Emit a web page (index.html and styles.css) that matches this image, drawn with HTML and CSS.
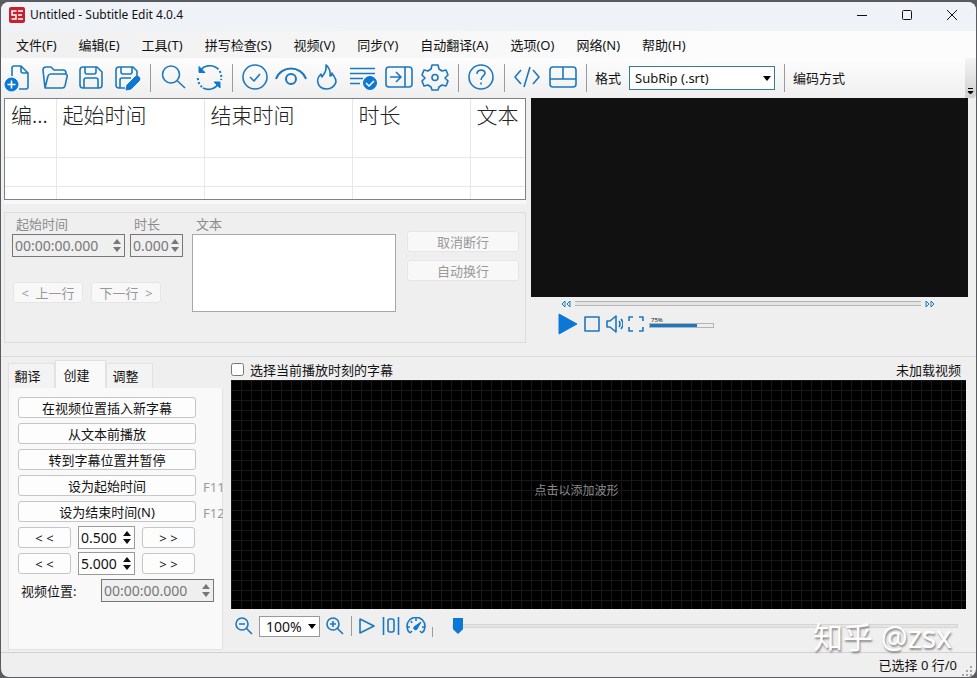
FILE: index.html
```html
<!DOCTYPE html>
<html lang="zh-CN">
<head>
  <meta charset="UTF-8" />
  <meta name="viewport" content="width=device-width, initial-scale=1.0" />
  <title>Untitled - Subtitle Edit 4.0.4</title>
  <link rel="stylesheet" href="styles.css">
</head>
<body>
  <div class="window">
    <header class="titlebar">
      <svg class="app-icon" width="16" height="16" viewBox="0 0 16 16">
        <rect width="16" height="16" rx="2" fill="#c4222d" />
        <path d="M7.500 4H3v4h4v4H2.500M9 4h5M9 8h4M9 12h5" fill="none" stroke="#fff" stroke-width="1.500" />
      </svg>
      <span class="title">Untitled - Subtitle Edit 4.0.4</span>
      <button class="win-btn" aria-label="最小化"><svg width="12" height="12" viewBox="0 0 12 12"><path d="M1 6.500h10" /></svg></button>
      <button class="win-btn" aria-label="最大化"><svg width="12" height="12" viewBox="0 0 12 12"><rect x="1.500" y="1.500" width="9" height="9" rx="1" /></svg></button>
      <button class="win-btn" aria-label="关闭"><svg width="12" height="12" viewBox="0 0 12 12"><path d="M1 1l10 10M11 1L1 11" /></svg></button>
    </header>

    <nav class="menu">
      <a href="#">文件(F)</a>
      <a href="#">编辑(E)</a>
      <a href="#">工具(T)</a>
      <a href="#">拼写检查(S)</a>
      <a href="#">视频(V)</a>
      <a href="#">同步(Y)</a>
      <a href="#">自动翻译(A)</a>
      <a href="#">选项(O)</a>
      <a href="#">网络(N)</a>
      <a href="#">帮助(H)</a>
    </nav>

    <div class="toolbar">
      <button class="tool" aria-label="新建"><svg viewBox="0 0 28 28"><path d="M7 12V4a2 2 0 0 1 2-2h7l7 7v14a2 2 0 0 1-2 2h-7M16 2v5a2 2 0 0 0 2 2h5" /><circle class="fill" cx="6.500" cy="20.500" r="6.500" /><path class="white" d="M6.500 16.500v8M2.500 20.500h8" /></svg></button>
      <button class="tool" aria-label="打开"><svg viewBox="0 0 28 28"><path d="M4 24L2 6a3 3 0 0 1 3-3h5l3 3h9a3 3 0 0 1 3 3v1M4 24l3-12a3 3 0 0 1 3-2h14a2 2 0 0 1 2 3l-2 9a3 3 0 0 1-3 2z" /></svg></button>
      <button class="tool" aria-label="保存"><svg viewBox="0 0 28 28"><path d="M6 3h14l5 5v13a3 3 0 0 1-3 3H6a3 3 0 0 1-3-3V6a3 3 0 0 1 3-3zM8 3v5a2 2 0 0 0 2 2h7a2 2 0 0 0 2-2V3M7 24v-8a2 2 0 0 1 2-2h10a2 2 0 0 1 2 2v8" /></svg></button>
      <button class="tool" aria-label="另存为"><svg viewBox="0 0 28 28"><path d="M12 24H6a3 3 0 0 1-3-3V6a3 3 0 0 1 3-3h14l4 4v5M8 3v5a2 2 0 0 0 2 2h7a2 2 0 0 0 2-2V3M7 24v-8a2 2 0 0 1 2-2h9" /><path class="fill" d="M13 26l1-5 8-8a2.500 2.500 0 0 1 4 4l-8 8z" /></svg></button>
      <span class="sep"></span>
      <button class="tool" aria-label="查找"><svg viewBox="0 0 28 28"><circle cx="12" cy="10.500" r="8.500" /><path d="M18 16.500l8 7.500" /></svg></button>
      <button class="tool" aria-label="替换"><svg viewBox="0 0 28 28"><path d="M5 7a12 12 0 0 1 17-3M24 19a12 12 0 0 1-16 5" /><path class="fill" d="M4 2.500v6h6zM25 24v-6h-6z" /><path class="dots" d="M22 4a12 12 0 0 1 4 12M7 23a12 12 0 0 1-4-11" /></svg></button>
      <span class="sep"></span>
      <button class="tool" aria-label="修复常见错误"><svg viewBox="0 0 28 28"><circle cx="14" cy="13" r="12" /><path d="M9 13l4 4 6-7" /></svg></button>
      <button class="tool" aria-label="视觉同步"><svg viewBox="0 0 28 28"><path class="bold" d="M-1 15C4 1 24 1 29 15" /><circle class="bold" cx="14" cy="15" r="5" /></svg></button>
      <button class="tool" aria-label="刻录"><svg viewBox="0 0 28 28"><path d="M13 1c1 7-2 8-4 12-1-1-1-2-1-3-3 3-4 6-3 9 1 4 5 6 9 6s8-3 9-7c0-5-3-6-4-9 0 2-1 3-2 3 1-4-1-9-4-11z" /></svg></button>
      <button class="tool" aria-label="批量"><svg viewBox="0 0 28 28"><path d="M1 4.500h25M1 9.500h25M1 14.500h13M1 19.500h10" /><circle class="fill" cx="21" cy="19" r="6.500" /><path class="white" d="M17 19l3 3 5-5" /></svg></button>
      <button class="tool" aria-label="移动"><svg viewBox="0 0 28 28"><rect x="1" y="3" width="26" height="20" rx="3" /><path d="M20 3v20M5 13h10M11 8l5 5-5 5" /></svg></button>
      <button class="tool" aria-label="设置"><svg viewBox="0 0 28 28"><path d="M11 1h6l1 4 3 2 4-1 2 5-3 3 3 3-2 5-4-1-3 2-1 3h-6l-1-3-3-2-4 1-2-5 3-3-3-3 2-5 4 1 3-2z" /><circle cx="14" cy="13.500" r="3" /></svg></button>
      <span class="sep"></span>
      <button class="tool" aria-label="帮助"><svg viewBox="0 0 28 28"><circle cx="14" cy="13" r="12" /><path d="M10 10c0-5 8-5 8-1 0 3-4 3-4 7M14 18.500v2" /></svg></button>
      <span class="sep"></span>
      <button class="tool" aria-label="源代码视图"><svg viewBox="0 0 28 28"><path d="M8 6l-6 7 6 7M20 6l6 7-6 7M17 3l-6 20" /></svg></button>
      <button class="tool" aria-label="布局"><svg viewBox="0 0 28 28"><rect x="1" y="3" width="26" height="20" rx="3" /><path d="M1 15h26M14 3v12" /></svg></button>
      <span class="sep"></span>
      <label for="format">格式</label>
      <select id="format" class="format"><option>SubRip (.srt)</option></select>
      <span class="sep"></span>
      <span>编码方式</span>
      <button class="overflow" aria-label="更多"><svg width="9" height="9" viewBox="0 0 9 9"><path d="M2 1.500h5M2 4.500h5L4.500 7z" fill="#000" stroke="#000" /></svg></button>
    </div>

    <main class="top">
      <section class="left">
        <div class="list">
          <table>
            <colgroup><col class="c-num"><col class="c-time"><col class="c-time"><col class="c-dur"><col></colgroup>
            <thead>
              <tr><th>编...</th><th>起始时间</th><th>结束时间</th><th>时长</th><th>文本</th></tr>
            </thead>
            <tbody>
              <tr><td></td><td></td><td></td><td></td><td></td></tr>
              <tr><td></td><td></td><td></td><td></td><td></td></tr>
              <tr><td></td><td></td><td></td><td></td><td></td></tr>
            </tbody>
          </table>
        </div>

        <div class="edit">
          <div class="timing">
            <div class="field">
              <label for="start">起始时间</label>
              <div class="spin off"><input id="start" type="text" value="00:00:00.000" disabled><i class="arrows"></i></div>
            </div>
            <div class="field">
              <label for="duration">时长</label>
              <div class="spin off"><input id="duration" type="text" value="0.000" disabled><i class="arrows"></i></div>
            </div>
            <div class="steps">
              <button class="btn" disabled>&lt;&nbsp; 上一行</button>
              <button class="btn" disabled>下一行&nbsp; &gt;</button>
            </div>
          </div>
          <div class="field text">
            <label for="text">文本</label>
            <textarea id="text" disabled></textarea>
          </div>
          <div class="breaks">
            <button class="btn" disabled>取消断行</button>
            <button class="btn" disabled>自动换行</button>
          </div>
        </div>
      </section>

      <section class="player">
        <div class="video"></div>
        <div class="seek">
          <svg width="10" height="8" viewBox="0 0 10 8"><path d="M4 1L1 4l3 3zM9 1L6 4l3 3z" /></svg>
          <input type="range" value="0" aria-label="播放进度">
          <svg width="10" height="8" viewBox="0 0 10 8"><path d="M1 1l3 3-3 3zM6 1l3 3-3 3z" /></svg>
        </div>
        <div class="controls">
          <button aria-label="播放"><svg width="22" height="24" viewBox="0 0 22 24"><path class="fill" d="M2 2l18 10L2 22z" /></svg></button>
          <button aria-label="停止"><svg width="18" height="18" viewBox="0 0 18 18"><rect x="2" y="2" width="14" height="14" /></svg></button>
          <button aria-label="静音"><svg width="18" height="18" viewBox="0 0 18 18"><path d="M2 6h3l6-5v16l-6-5H2zM14 6q2 3 0 6M16 4q4 5 0 10" /></svg></button>
          <button aria-label="全屏"><svg width="18" height="18" viewBox="0 0 18 18"><path d="M2 6V2h4M12 2h4v4M16 12v4h-4M6 16H2v-4" /></svg></button>
          <div class="volume">
            <label for="volume">75%</label>
            <input id="volume" type="range" value="75">
          </div>
        </div>
      </section>
    </main>

    <div class="bottom">
      <section class="side">
        <div class="tabs">
          <button>翻译</button>
          <button class="active">创建</button>
          <button>调整</button>
        </div>
        <div class="create">
          <div class="row"><button class="btn long">在视频位置插入新字幕</button></div>
          <div class="row"><button class="btn long">从文本前播放</button></div>
          <div class="row"><button class="btn long">转到字幕位置并暂停</button></div>
          <div class="row"><button class="btn long">设为起始时间</button><span class="key">F11</span></div>
          <div class="row"><button class="btn long">设为结束时间(N)</button><span class="key">F12</span></div>
          <div class="row">
            <button class="btn jump">&lt; &lt;</button>
            <div class="spin"><input type="text" value="0.500" aria-label="短跳转秒数"><i class="arrows"></i></div>
            <button class="btn jump">&gt; &gt;</button>
          </div>
          <div class="row">
            <button class="btn jump">&lt; &lt;</button>
            <div class="spin"><input type="text" value="5.000" aria-label="长跳转秒数"><i class="arrows"></i></div>
            <button class="btn jump">&gt; &gt;</button>
          </div>
          <div class="row position">
            <label for="position">视频位置:</label>
            <div class="spin off"><input id="position" type="text" value="00:00:00.000" disabled><i class="arrows"></i></div>
          </div>
        </div>
      </section>

      <section class="wave-pane">
        <div class="wave-head">
          <input type="checkbox" id="follow">
          <label for="follow">选择当前播放时刻的字幕</label>
          <span class="no-video">未加载视频</span>
        </div>
        <div class="wave">点击以添加波形</div>
        <div class="wave-tools">
          <button aria-label="缩小"><svg width="18" height="18" viewBox="0 0 18 18"><circle cx="7" cy="7" r="6" /><path d="M11 11l6 6M4 7h6" /></svg></button>
          <select class="zoom" aria-label="缩放"><option>100%</option></select>
          <button aria-label="放大"><svg width="18" height="18" viewBox="0 0 18 18"><circle cx="7" cy="7" r="6" /><path d="M11 11l6 6M4 7h6M7 4v6" /></svg></button>
          <span class="sep"></span>
          <button aria-label="播放选中"><svg width="18" height="18" viewBox="0 0 18 18"><path d="M2 2v14l14-7z" /></svg></button>
          <button aria-label="居中"><svg width="18" height="18" viewBox="0 0 18 18"><path d="M1.500 0v18M16.500 0v18" /><rect x="6" y="2" width="6" height="13" rx="2" /></svg></button>
          <button aria-label="播放速度"><svg width="20" height="18" viewBox="0 0 20 18"><path d="M4 16A9 9 0 1 1 16 16M4 16l2-2M16 16l-2-2M1 10h3M16 10h3M5 4l1 2M10 1v3" /><path class="fill" d="M15 5l-4 7a1.500 1.500 0 0 1-3-2z" /></svg></button>
          <span class="sep short"></span>
          <input class="scroll" type="range" value="0" aria-label="波形位置">
        </div>
      </section>
    </div>

    <footer class="status">
      <span>已选择 0 行/0</span>
      <svg width="12" height="12" viewBox="0 0 12 12"><path d="M9 1h2v2H9zM9 5h2v2H9zM9 9h2v2H9zM5 5h2v2H5zM5 9h2v2H5zM1 9h2v2H1z" fill="#a5a5a5" /></svg>
    </footer>
    <div class="watermark">知乎 @zsx</div>
  </div>
</body>
</html>
```
FILE: styles.css
```css
* {
  box-sizing: border-box;
}
body {
  margin: 0;
  padding: 2px 1px 1px;
  min-height: 100vh;
  display: flex;
  background-color: #5a5b60;
  color: #111;
  font-family: "Noto Sans", "Noto Sans CJK SC", sans-serif;
  font-size: 13px;
  line-height: 16px;
}
button, input, select, textarea {
  font: inherit;
  color: inherit;
  margin: 0;
}
button {
  padding: 0;
  border: 0;
  background: none;
}
.window {
  position: relative;
  flex: 1;
  min-width: 0;
  display: flex;
  flex-direction: column;
  background-color: #efefef;
  border-radius: 8px;
  overflow: hidden;
}

/* title and menu */
.titlebar {
  display: flex;
  align-items: center;
  height: 29px;
  padding: 0 2px 3px 8px;
  background-color: #eff3f8;
}
.title {
  flex: 1;
  margin-left: 5px;
  font-size: 12px;
}
.win-btn {
  width: 45px;
  height: 26px;
}
.win-btn svg {
  display: block;
  margin: auto;
  fill: none;
  stroke: #111;
}
.menu {
  display: flex;
  align-items: center;
  gap: 22px;
  height: 27px;
  padding: 0 15px;
  background: linear-gradient(to right, #f0f0f0, #fcfcfc 75%);
}
.menu a {
  color: inherit;
  text-decoration: none;
  white-space: nowrap;
}

/* toolbar */
.toolbar {
  display: flex;
  align-items: center;
  gap: 8px;
  height: 40px;
  padding-left: 4px;
  background: linear-gradient(#fdfdfd, #efefef);
  white-space: nowrap;
}
.tool, .tool svg {
  display: block;
  width: 28px;
  height: 28px;
  flex: none;
  overflow: visible;
}
.tool svg, .controls svg, .wave-tools svg {
  display: block;
  fill: none;
  stroke: #1c78bd;
  stroke-width: 1.6;
  stroke-linejoin: round;
}
svg .fill {
  fill: #0a78d4;
  stroke: #0a78d4;
  stroke-width: 1;
}
svg .white {
  stroke: #fff;
}
svg .bold {
  stroke-width: 2;
}
svg .dots {
  stroke-width: 2;
  stroke-dasharray: 2 2;
}
.sep {
  flex: none;
  width: 1px;
  height: 28px;
  margin-left: 1px;
  background-color: #9b9b9b;
}
select {
  appearance: none;
  border-radius: 0;
  background: #fff url("data:image/svg+xml,%3Csvg xmlns='http://www.w3.org/2000/svg' width='8' height='5'%3E%3Cpath d='M0 0h8L4 5z'/%3E%3C/svg%3E") no-repeat right 3px center;
}
.format {
  width: 146px;
  height: 24px;
  padding: 0 5px;
  border: 1px solid #33808a;
}
.overflow {
  align-self: stretch;
  display: flex;
  align-items: flex-end;
  justify-content: center;
  width: 11px;
  margin-left: auto;
  padding-bottom: 2px;
  background: linear-gradient(#f4f4f4, #d0d0d0);
  border-radius: 0 0 4px 0;
}

/* subtitle list */
.top {
  display: grid;
  grid-template-columns: minmax(0, 522fr) minmax(0, 437fr);
  gap: 5px;
  padding: 0 8px 13px 3px;
}
.list {
  height: 102px;
  border: 1px solid #7f8184;
  background-color: #fff;
  box-shadow: 0 4px #f8f8f8;
  overflow: hidden;
}
table {
  width: 100%;
  table-layout: fixed;
  border-collapse: collapse;
}
.c-num {
  width: 51px;
}
.c-time {
  width: 148px;
}
.c-dur {
  width: 118px;
}
th {
  height: 29px;
  padding: 0 0 0 6px;
  border-right: 1px solid #e4e4e4;
  color: #222;
  font-family: "Noto Sans CJK SC", sans-serif;
  font-size: 21px;
  font-weight: 300;
  line-height: 28px;
  text-align: left;
  white-space: nowrap;
}
td {
  height: 29px;
  padding: 0;
  border-right: 1px solid #e6e9ec;
  border-bottom: 1px solid #e6e9ec;
}
th:last-child, td:last-child {
  border-right: 0;
}

/* edit box */
.edit {
  display: flex;
  height: 131px;
  margin-top: 12px;
  padding: 3px 6px 0 7px;
  border: 1px solid #dcdcdc;
  color: #8c8c8c;
}
.timing {
  display: grid;
  grid-template-columns: 113px 53px;
  grid-template-rows: 40px 20px;
  gap: 26px 5px;
}
.field label {
  display: block;
  height: 18px;
  padding-left: 4px;
}
.steps {
  grid-column: 1 / 3;
  display: flex;
  gap: 8px;
  padding-left: 1px;
}
.steps .btn {
  width: 70px;
}
.text {
  flex: 1;
  margin-left: 9px;
}
.text textarea {
  display: block;
  width: 100%;
  height: 78px;
  border: 1px solid #a8a8a8;
  background-color: #fff;
  resize: none;
}
.breaks {
  display: flex;
  flex-direction: column;
  gap: 8px;
  width: 112px;
  margin: 15px 0 0 11px;
}
.btn {
  height: 21px;
  padding-top: 1px;
  border: 1px solid #c6c6c6;
  border-radius: 3px;
  background-color: #fdfdfd;
  text-align: center;
}
.btn:disabled {
  border-color: #e6e6e6;
  background-color: #f8f8f8;
  color: #999;
}
.spin {
  display: flex;
  align-items: center;
  height: 23px;
  padding: 0 3px 0 2px;
  border: 1px solid #9a9a9a;
  background-color: #fff;
}
.spin.off {
  border-color: #777;
  background-color: #efefef;
  color: #777;
}
.spin input {
  flex: 1;
  min-width: 0;
  width: 0;
  padding: 0;
  border: 0;
  background: none;
  font-size: 14px;
}
.arrows {
  display: grid;
  gap: 3px;
}
.arrows::before, .arrows::after {
  content: "";
  border: 4px solid transparent;
}
.arrows::before {
  border-top: 0;
  border-bottom: 5px solid;
}
.arrows::after {
  border-bottom: 0;
  border-top: 5px solid;
}

/* video player */
.player {
  display: flex;
  flex-direction: column;
}
.video {
  flex: 1;
  background-color: #111;
}
.seek {
  display: flex;
  align-items: center;
  gap: 4px;
  height: 13px;
  padding: 0 33px 0 30px;
}
.seek svg {
  fill: none;
  stroke: #1c78bd;
}
input[type="range"] {
  appearance: none;
  min-width: 0;
  background: #e4e4e4;
  border: 1px solid #b4b4b4;
}
input[type="range"]::-webkit-slider-thumb {
  appearance: none;
  width: 0;
  height: 0;
}
.seek input {
  flex: 1;
  height: 5px;
  border-width: 1px 0;
}
.controls {
  display: flex;
  align-items: center;
  gap: 4px;
  height: 28px;
  margin-bottom: 5px;
  padding-left: 26px;
}
.volume {
  width: 65px;
  height: 15px;
}
.volume label, .volume input {
  display: block;
}
.volume label {
  padding-left: 2px;
  font-size: 6px;
  line-height: 6px;
}
.volume input {
  width: 100%;
  height: 5px;
  background: linear-gradient(to right, #1c78bd 75%, #eee 75%);
}

/* tabs */
.bottom {
  flex: 1;
  display: flex;
  gap: 8px;
  padding: 3px 10px 2px 7px;
  border-top: 1px solid #dadada;
}
.side {
  display: flex;
  flex-direction: column;
  width: 215px;
  overflow: hidden;
}
.tabs {
  display: flex;
  align-items: flex-end;
  height: 28px;
}
.tabs button {
  width: 47px;
  height: 25px;
  padding-right: 8px;
  border: 1px solid #e2e2e2;
  border-bottom: 0;
  background-color: #f3f3f3;
}
.tabs .active {
  width: 51px;
  height: 28px;
  background-color: #f9f9f9;
}
.create {
  flex: 1;
  display: flex;
  flex-direction: column;
  gap: 3px;
  padding: 8px 8px 0 9px;
  border: 1px solid #e2e2e2;
  border-top: 0;
  background-color: #f9f9f9;
}
.row {
  display: flex;
  align-items: center;
  gap: 7px;
  height: 23px;
  white-space: nowrap;
}
.row .long {
  flex: none;
  width: 178px;
}
.row .jump {
  width: 53px;
}
.row .spin {
  width: 57px;
}
.key {
  padding-top: 2px;
  color: #999;
}
.position {
  justify-content: space-between;
  margin-top: 1px;
  padding-left: 3px;
}
.position .spin {
  width: 113px;
}

/* waveform */
.wave-pane {
  flex: 1;
  display: flex;
  flex-direction: column;
}
.wave-head {
  display: flex;
  align-items: center;
  height: 20px;
  padding-bottom: 1px;
}
.wave-head input {
  width: 13px;
  height: 13px;
  margin-right: 6px;
}
.no-video {
  margin-left: auto;
  padding-right: 5px;
}
.wave {
  flex: 1;
  display: flex;
  align-items: center;
  justify-content: center;
  padding: 0 44px 8px 0;
  background-color: #000;
  background-image: linear-gradient(#181818 1px, transparent 1px), linear-gradient(to right, #181818 1px, transparent 1px);
  background-size: 10px 10px;
  color: #8a8a8a;
  font-size: 12px;
}
.wave-tools {
  display: flex;
  align-items: center;
  gap: 6px;
  height: 41px;
  padding: 0 8px 7px 4px;
}
.wave-tools .sep {
  height: 20px;
}
.wave-tools .short {
  height: 10px;
  margin: 12px 13px 0 0;
}
.zoom {
  width: 61px;
  height: 21px;
  padding: 2px 6px 0;
  border: 1px solid #999;
  font-size: 14px;
}
.wave-tools .scroll {
  flex: 1;
  height: 4px;
  border-color: #d6d6d6;
}
.wave-tools .scroll::-webkit-slider-thumb {
  width: 10px;
  height: 16px;
  background-color: #0a78d4;
  clip-path: polygon(0 0, 100% 0, 100% 70%, 50% 100%, 0 70%);
}

/* status bar */
.status {
  display: flex;
  align-items: center;
  justify-content: flex-end;
  gap: 4px;
  height: 25px;
  padding-right: 3px;
  border-top: 1px solid #d2d2d2;
}
.status svg {
  align-self: flex-end;
}
.watermark {
  position: absolute;
  right: 24px;
  bottom: 22px;
  color: #fff;
  font-size: 30px;
  line-height: 36px;
  text-shadow: 1px 2px 2px #888;
  pointer-events: none;
}
```
